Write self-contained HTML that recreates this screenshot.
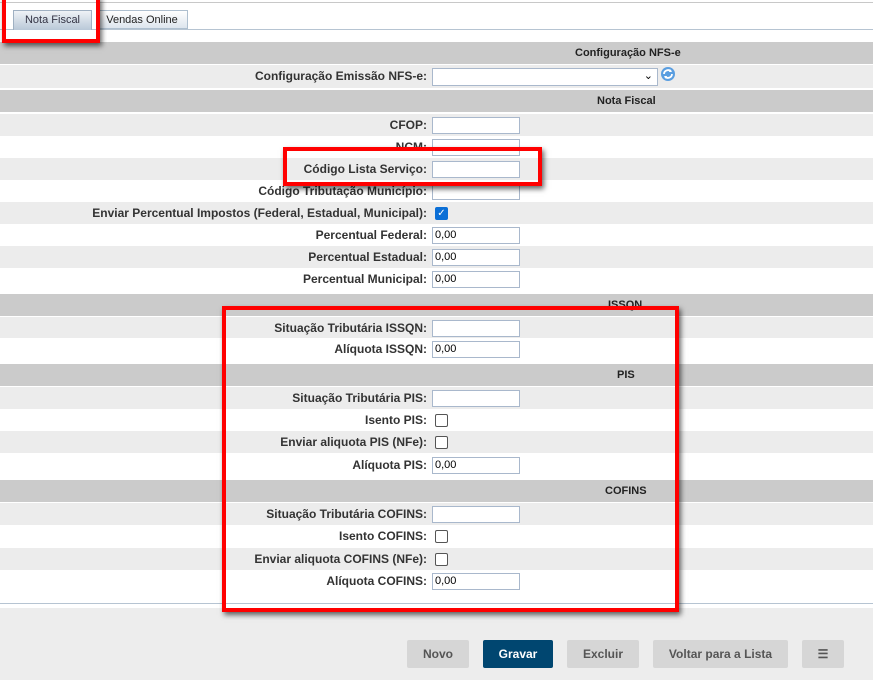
<!DOCTYPE html>
<html><head><meta charset="utf-8"><style>
*{margin:0;padding:0;box-sizing:border-box}
body{width:873px;height:680px;position:relative;background:#fff;font-family:"Liberation Sans",Arial,sans-serif;font-size:12px;color:#333;overflow:hidden}
.a{position:absolute}
.r{position:absolute;left:0;width:873px;height:22px}
.l{background:#ececec}
.h{background:#cbcbcb;font-weight:bold;font-size:11px;color:#222}
.lb{position:absolute;right:446px;top:4px;white-space:nowrap;font-size:12px;color:#333;font-weight:bold}
.in{position:absolute;left:432px;top:3px;width:88px;height:17px;border:1px solid #a9b8cc;background:#fff;font-size:11px;padding-left:2px;line-height:15px;color:#000}
.cb{position:absolute;left:435px;top:5px;width:13px;height:13px;border:1px solid #555;border-radius:2px;background:#fff}
.ht{position:absolute;top:5px}
.red{position:absolute;border:4px solid #f00;box-shadow:2px 3px 5px rgba(0,0,0,.6)}
.btn{position:absolute;top:640px;height:28px;background:#d6d6d6;border-radius:2px;color:#555;font-weight:bold;font-size:12px;text-align:center;line-height:28px}
</style></head><body>
<div class="a" style="left:0;top:2px;width:873px;height:1px;background:#c8c8c8"></div>
<div class="a" style="left:0;top:29px;width:873px;height:1px;background:#b6c4d2"></div>
<div class="a" style="left:13px;top:10px;width:79px;height:20px;background:linear-gradient(#eef2f6,#b9c8d8);border:1px solid #9fb0c2;border-bottom:none;text-align:center;line-height:19px;font-size:11px;color:#334">Nota Fiscal</div>
<div class="a" style="left:96px;top:10px;width:92px;height:19px;background:linear-gradient(#fff,#dde5ee);border:1px solid #aebfcf;text-align:center;line-height:18px;font-size:11px;color:#222">Vendas Online</div>

<div class="r h" style="top:42px"><span class="ht" style="left:575px">Configuração NFS-e</span></div>
<div class="r l" style="top:65px;height:23px"><span class="lb">Configuração Emissão NFS-e:</span><div class="in" style="width:226px;top:3px;height:18px"><span style="position:absolute;right:4px;top:0;font-size:11px">&#8964;</span></div>
<svg class="a" style="left:660px;top:1px" width="16" height="16" viewBox="0 0 16 16"><circle cx="8" cy="8" r="7" fill="#5a9ee0"/><path d="M4 8a4 4 0 0 1 7-2.5M12 8a4 4 0 0 1-7 2.5" stroke="#fff" stroke-width="1.8" fill="none"/><path d="M10 3l2 3-3 0z M6 13l-2-3 3 0z" fill="#fff"/></svg></div>
<div class="r h" style="top:90px"><span class="ht" style="left:597px">Nota Fiscal</span></div>
<div class="r l" style="top:114px"><span class="lb">CFOP:</span><div class="in"></div></div>
<div class="r" style="top:136px"><span class="lb">NCM:</span><div class="in"></div></div>
<div class="r l" style="top:158px"><span class="lb">Código Lista Serviço:</span><div class="in"></div></div>
<div class="r" style="top:180px"><span class="lb">Código Tributação Município:</span><div class="in"></div></div>
<div class="r l" style="top:202px"><span class="lb">Enviar Percentual Impostos (Federal, Estadual, Municipal):</span><div class="cb" style="background:#0b6fd6;border-color:#0b6fd6;color:#fff;font-size:10px;line-height:11px;text-align:center">✓</div></div>
<div class="r" style="top:224px"><span class="lb">Percentual Federal:</span><div class="in">0,00</div></div>
<div class="r l" style="top:246px"><span class="lb">Percentual Estadual:</span><div class="in">0,00</div></div>
<div class="r" style="top:268px"><span class="lb">Percentual Municipal:</span><div class="in">0,00</div></div>
<div class="r h" style="top:294px"><span class="ht" style="left:608px">ISSQN</span></div>
<div class="r l" style="top:317px;height:21px"><span class="lb">Situação Tributária ISSQN:</span><div class="in"></div></div>
<div class="r" style="top:338px"><span class="lb">Alíquota ISSQN:</span><div class="in">0,00</div></div>
<div class="r h" style="top:364px"><span class="ht" style="left:617px">PIS</span></div>
<div class="r l" style="top:387px"><span class="lb">Situação Tributária PIS:</span><div class="in"></div></div>
<div class="r" style="top:409px"><span class="lb">Isento PIS:</span><div class="cb"></div></div>
<div class="r l" style="top:431px"><span class="lb">Enviar aliquota PIS (NFe):</span><div class="cb"></div></div>
<div class="r" style="top:454px"><span class="lb">Alíquota PIS:</span><div class="in">0,00</div></div>
<div class="r h" style="top:480px"><span class="ht" style="left:605px">COFINS</span></div>
<div class="r l" style="top:503px"><span class="lb">Situação Tributária COFINS:</span><div class="in"></div></div>
<div class="r" style="top:525px"><span class="lb">Isento COFINS:</span><div class="cb"></div></div>
<div class="r l" style="top:548px"><span class="lb">Enviar aliquota COFINS (NFe):</span><div class="cb"></div></div>
<div class="r" style="top:570px"><span class="lb">Alíquota COFINS:</span><div class="in">0,00</div></div>
<div class="a" style="left:0;top:603px;width:873px;height:1px;background:#b6c4d2"></div>
<div class="a" style="left:0;top:608px;width:873px;height:72px;background:#ededed"></div>
<div class="btn" style="left:407px;width:62px">Novo</div>
<div class="btn" style="left:483px;width:70px;background:#004670;color:#fff">Gravar</div>
<div class="btn" style="left:567px;width:72px">Excluir</div>
<div class="btn" style="left:653px;width:135px">Voltar para a Lista</div>
<div class="btn" style="left:802px;width:42px">☰</div>

<div class="red" style="left:2px;top:-4px;width:98px;height:47px"></div>
<div class="red" style="left:283px;top:147px;width:259px;height:39px"></div>
<div class="red" style="left:222px;top:306px;width:457px;height:306px"></div>
</body></html>
